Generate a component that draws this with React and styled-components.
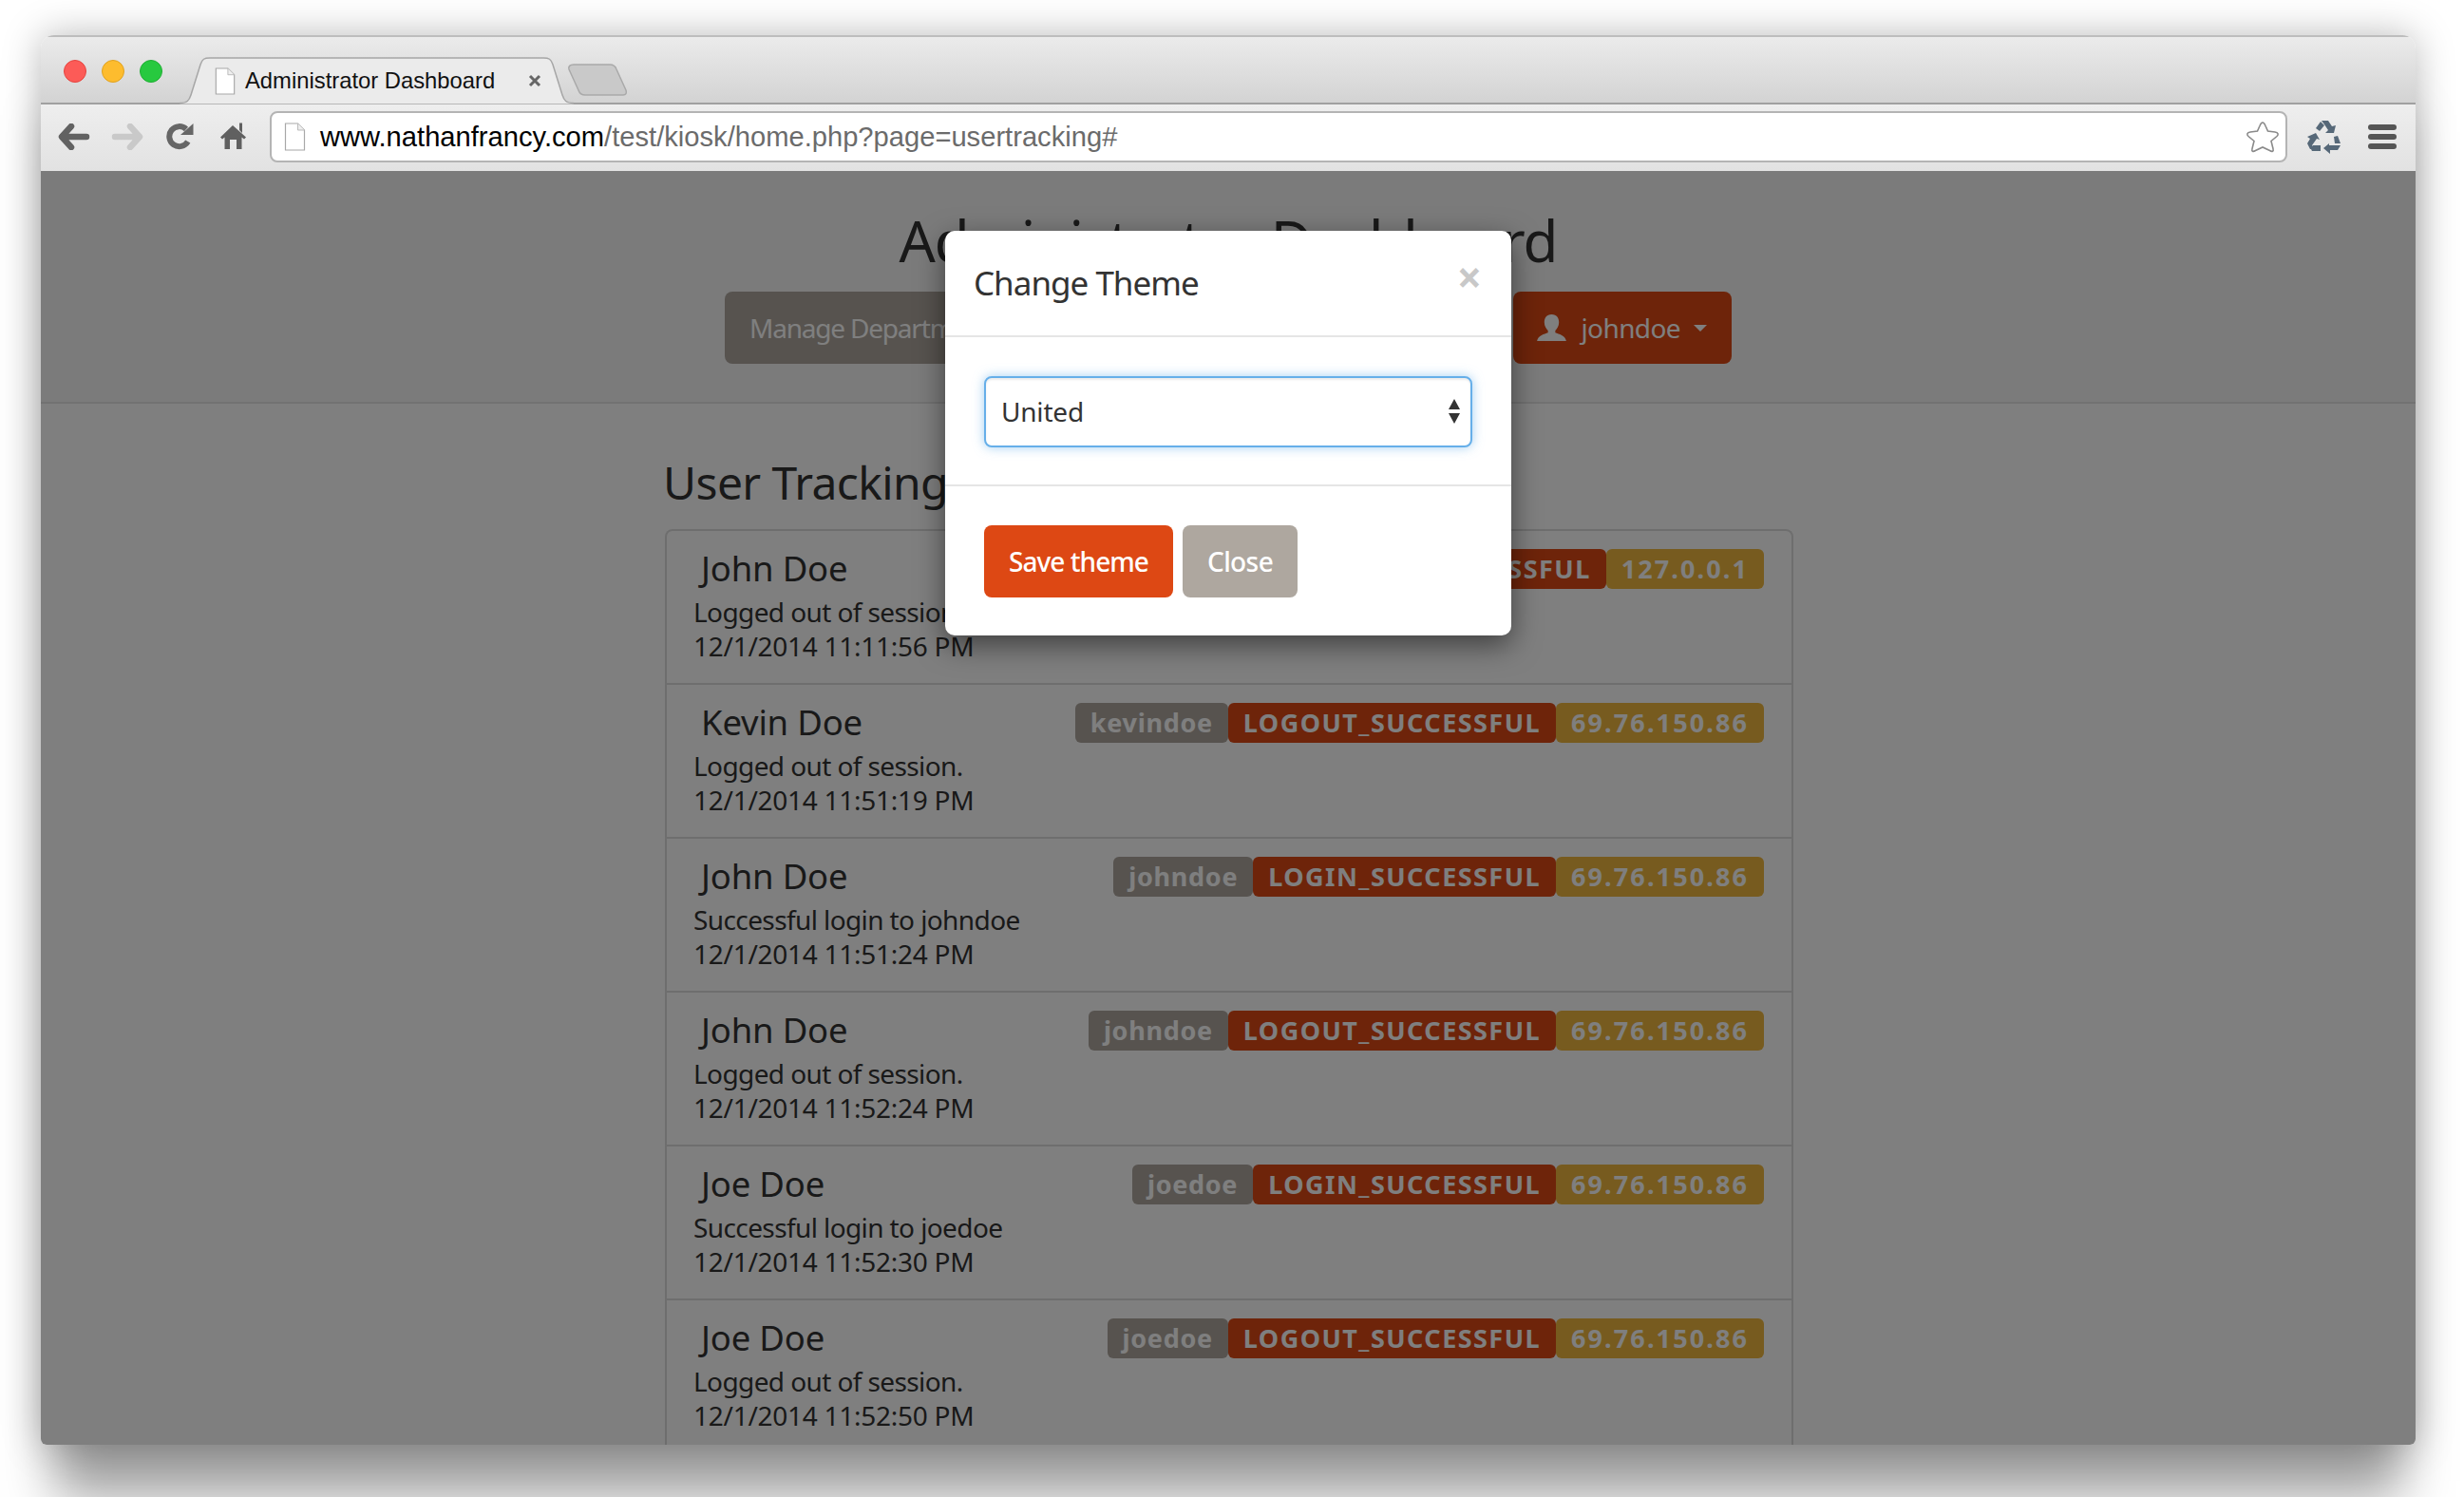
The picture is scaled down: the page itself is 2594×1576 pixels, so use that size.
import React from 'react';
import styled, { createGlobalStyle } from 'styled-components';

const Global = createGlobalStyle`
  html, body { margin: 0; padding: 0; background: #fff; overflow: hidden; }
  * { box-sizing: border-box; }
`;
const UI = `"Noto Sans", "Open Sans", sans-serif`;
const CHROME = `"Liberation Sans", Arial, sans-serif`;

const Stage = styled.div`
  width: 2594px; height: 1576px; padding: 37px 51px 0 43px; overflow: hidden;
`;
const Win = styled.div`
  width: 2500px; height: 1484px; display: flex; flex-direction: column;
  border-radius: 14px 14px 6px 6px;
  box-shadow: 0 70px 50px -14px rgba(0,0,0,.36), 0 0 40px rgba(0,0,0,.28);
  overflow: hidden; background: #fff;
`;
const Strip = styled.div`
  height: 73px; flex: none; display: flex; align-items: flex-end; padding-left: 24px;
  background: linear-gradient(#ebebeb, #d3d3d3);
  border-top: 2px solid #bdbdbd; border-bottom: 2px solid #a0a0a0;
`;
const Lights = styled.div`display: flex; gap: 16px; margin: 0 18px 21px 0;`;
const Light = styled.span`
  width: 24px; height: 24px; border-radius: 50%; background: ${p => p.$c};
  border: 1px solid ${p => p.$b};
`;
const Tab = styled.div`
  position: relative; width: 415px; height: 50px; margin-bottom: -2px; z-index: 1;
  display: flex; align-items: center; padding: 0 0 0 37px; flex: none;
  font: 23.8px ${CHROME}; color: #111;
`;
const TabShape = styled.svg`position: absolute; left: 0; top: 0; z-index: -1;`;
const TabTitle = styled.span`margin-left: 10px; width: 298px; white-space: nowrap;`;
const TabClose = styled.svg`display: block;`;
const NewTab = styled.svg`margin: 0 0 7px -8px; flex: none;`;

const Toolbar = styled.div`
  height: 70px; flex: none; display: flex; align-items: center; padding: 0 4px 2px 7px;
  background: linear-gradient(#eeeeee, #e2e2e2);
`;
const Slot = styled.div`
  width: ${p => p.$w || 56}px; height: 56px; flex: none;
  display: flex; align-items: center; justify-content: center;
`;
const Address = styled.div`
  flex: 1; height: 54px; margin: 0 7px 0 10px; display: flex; align-items: center; gap: 15px;
  padding: 0 6px 0 13px;
  background: #fff; border: 2px solid #b4b4b4; border-radius: 8px;
  font: 29.15px ${CHROME}; white-space: nowrap;
`;
const Url = styled.span`flex: 1; color: #6b6b6b;`;
const Host = styled.span`color: #000;`;
const Burger = styled.div`display: flex; flex-direction: column; gap: 4px;`;
const BurgerBar = styled.span`width: 30px; height: 6px; border-radius: 3px; background: #555;`;

const Page = styled.div`
  position: relative; flex: 1; overflow: hidden; background: #fff;
  font-family: ${UI}; color: #333;
`;
const Header = styled.header`
  height: 245px; background: #f7f7f7; border-bottom: 2px solid #e4e4e4;
  display: flex; flex-direction: column; align-items: center; padding-top: 34px;
`;
const Title = styled.h1`
  margin: 0; font-size: 60px; line-height: 78px; font-weight: 400; color: #333; letter-spacing: -1px;
`;
const BtnRow = styled.div`
  width: 1060px; margin-top: 15px; display: flex; justify-content: space-between;
`;
const Btn = styled.button`
  height: 76px; padding: 0 ${p => p.$px || 26}px 0 ${p => p.$pl || p.$px || 26}px; border: 0; border-radius: 8px;
  background: ${p => p.$bg}; color: #fff; font: ${p => p.$w || 400} 28px ${UI}; letter-spacing: ${p => p.$ls || -.6}px;
  display: inline-flex; align-items: center; gap: 14px; white-space: nowrap;
`;
const Caret = styled.span`
  width: 0; height: 0; border: 7.5px solid transparent; border-top-color: #fff; border-bottom: 0;
`;
const Main = styled.main`width: 1190px; margin: 0 auto; padding: 54px 0 0 2px;`;
const Sub = styled.h3`
  margin: 0 0 20px -2px; font-size: 48px; line-height: 58px; font-weight: 400; color: #333; letter-spacing: -.6px;
`;
const List = styled.div`
  border: 2px solid #ddd; border-bottom: 0; border-radius: 8px 8px 0 0;
`;
const Row = styled.div`
  height: 162px; padding: 19px 29px 0 28px; border-bottom: 2px solid #ddd;
  &:last-child { border-bottom: 0; }
`;
const RowTop = styled.div`display: flex; justify-content: space-between; height: 42px;`;
const Name = styled.h4`
  margin: 0 0 0 8px; font-size: 36.5px; line-height: 40px; font-weight: 400; color: #333; letter-spacing: -.2px;
`;
const Badges = styled.div`display: flex;`;
const Badge = styled.span`
  height: 42px; padding: 0 16px; border-radius: 6px; background: ${p => p.$bg};
  color: #fff; font: 700 27px/42px ${UI}; letter-spacing: ${p => p.$ls}px;
`;
const Desc = styled.p`
  margin: 6px 0 0; font-size: 28px; line-height: 36px; color: #333; letter-spacing: -.6px;
`;
const Stamp = styled.span`letter-spacing: -.27px;`;
const Overlay = styled.div`
  position: absolute; inset: 0; background: rgba(0,0,0,.5);
  display: flex; justify-content: center; align-items: flex-start; padding-top: 63px;
`;
const Modal = styled.div`
  width: 596px; height: 426px; background: #fff; border-radius: 10px;
  box-shadow: 0 10px 30px rgba(0,0,0,.5); display: flex; flex-direction: column;
`;
const ModalHead = styled.div`
  height: 112px; flex: none; padding: 0 30px; border-bottom: 2px solid #e5e5e5;
  display: flex; justify-content: space-between; align-items: center;
`;
const ModalTitle = styled.h4`
  margin: -2px 0 0; font-size: 35px; font-weight: 400; color: #333; letter-spacing: -1px;
`;
const CloseX = styled.span`
  font: 700 46px ${UI}; line-height: 1; color: #c8c8c8; margin: -15px 1px 0 0;
`;
const ModalBody = styled.div`
  height: 157px; flex: none; padding: 41px 41px 0 41px; border-bottom: 2px solid #e5e5e5;
`;
const SelectWrap = styled.div`position: relative;`;
const Select = styled.select`
  display: block; width: 100%; height: 75px; padding: 0 16px 2px; appearance: none; background: #fff;
  border: 2px solid #66afe9; border-radius: 8px; color: #333; font: 400 28px ${UI}; letter-spacing: -.2px;
  box-shadow: inset 0 2px 2px rgba(0,0,0,.075), 0 0 12px rgba(102,175,233,.6); outline: none;
`;
const Spinner = styled.svg`position: absolute; right: 12px; top: 23px; pointer-events: none;`;
const ModalFoot = styled.div`padding: 41px 41px 0; display: flex; gap: 10px;`;

const Arrow = ({ color, flip }) => (
  <svg width="34" height="28" viewBox="0 0 34 28" style={flip ? { transform: 'scaleX(-1)' } : undefined}>
    <path d="M14 3 L4 14 L14 25 M5 14 H30" fill="none" stroke={color} strokeWidth="6.5" strokeLinecap="round" strokeLinejoin="round" />
  </svg>
);
const Reload = () => (
  <svg width="30" height="30" viewBox="0 0 30 30">
    <path d="M22.8 20 A10.5 10.5 0 1 1 21 7" fill="none" stroke="#666" strokeWidth="6" />
    <path d="M15 13 H28.5 V1 Z" fill="#666" />
  </svg>
);
const Home = () => (
  <svg width="28" height="30" viewBox="0 0 28 30">
    <path d="M13 3 L27 15.5 L25 17.5 L22.5 15.5 V28 H17 V18 H10 V28 H4.5 V15.5 L2 17.5 L0 15.5 Z M20 0.5 H23 V11 L20 8 Z" fill="#606060" />
  </svg>
);
const Recycle = () => (
  <svg width="40" height="40" viewBox="5 4 40 40">
    <g fill="#566878">
      <path d="M17 15 L22 8 L26 12 L21 18 Z" />
      <path d="M23 7 H30 L34 13 L38 12 L36 20 H27 L30 17 L26 11 Z" />
      <path d="M36 24 L40 23 L43 31 H37 Z" />
      <path d="M25 36 L31 31 V33 H43 L40 38 H32 V42 Z" />
      <path d="M14 33 H22 V39 H13 L11.5 36 Z" />
      <path d="M8 24 L17 20 L21 27 L18 26 L13 33 L15 37 H11 L8 31 L11 26 Z" />
    </g>
  </svg>
);
const FileIcon = ({ w, h }) => (
  <svg width={w} height={h} viewBox="0 0 22 30">
    <path d="M1 1 H14 L21 8 V29 H1 Z" fill="#fff" stroke="#a8a8a8" strokeWidth="1.2" />
    <path d="M14 1 V8 H21" fill="#eee" stroke="#bbb" strokeWidth="1" />
  </svg>
);
const Star = () => (
  <svg width="36" height="34" viewBox="0 0 36 34">
    <path d="M18 2 C19.5 2 20 3 21 5.5 L23.5 11 L31 12 C34.5 12.5 35 14.5 33 16.5 L27 21.5 L29 29.5 C29.8 32.5 28 33 25.5 31.5 L18 28 L10.5 31.5 C8 33 6.2 32.5 7 29.5 L9 21.5 L3 16.5 C1 14.5 1.5 12.5 5 12 L12.5 11 L15 5.5 C16 3 16.5 2 18 2 Z" fill="#fff" stroke="#8a8a8a" strokeWidth="1.6" />
  </svg>
);
const UserIcon = () => (
  <svg width="33" height="31" viewBox="0 0 30 30" preserveAspectRatio="none">
    <path d="M15 1 C20 1 22 5 22 9 C22 13 20 16 18.5 17.5 V19.5 C22 21 28 22 29 28 H1 C2 22 8 21 11.5 19.5 V17.5 C10 16 8 13 8 9 C8 5 10 1 15 1 Z" fill="#fff" />
  </svg>
);

const GRAY = '#AEA79F', RED = '#DD4814', GOLD = '#EFB73E';
const rows = [
  ['John Doe', 'johndoe', 'LOGOUT_SUCCESSFUL', '127.0.0.1', 'Logged out of session.', '12/1/2014 11:11:56 PM'],
  ['Kevin Doe', 'kevindoe', 'LOGOUT_SUCCESSFUL', '69.76.150.86', 'Logged out of session.', '12/1/2014 11:51:19 PM'],
  ['John Doe', 'johndoe', 'LOGIN_SUCCESSFUL', '69.76.150.86', 'Successful login to johndoe', '12/1/2014 11:51:24 PM'],
  ['John Doe', 'johndoe', 'LOGOUT_SUCCESSFUL', '69.76.150.86', 'Logged out of session.', '12/1/2014 11:52:24 PM'],
  ['Joe Doe', 'joedoe', 'LOGIN_SUCCESSFUL', '69.76.150.86', 'Successful login to joedoe', '12/1/2014 11:52:30 PM'],
  ['Joe Doe', 'joedoe', 'LOGOUT_SUCCESSFUL', '69.76.150.86', 'Logged out of session.', '12/1/2014 11:52:50 PM'],
];

export default function App() {
  return (
    <Stage>
      <Global />
      <Win>
        <Strip>
          <Lights>
            <Light $c="#fc5b57" $b="#e5443f" />
            <Light $c="#fdbc2e" $b="#e0a21f" />
            <Light $c="#27c93f" $b="#1fae33" />
          </Lights>
          <Tab>
            <TabShape width="415" height="50" viewBox="0 0 415 50">
              <path d="M0 48.5 C8 48.5 10 46 12 40 L22 8 C24 2 26 1 32 1 L383 1 C389 1 391 2 393 8 L403 40 C405 46 407 48.5 415 48.5 V50 H0 Z" fill="#ebebeb" stroke="#a6a6a6" strokeWidth="1.5" />
            </TabShape>
            <FileIcon w="22" h="29" />
            <TabTitle>Administrator Dashboard</TabTitle>
            <TabClose width="14" height="14" viewBox="0 0 14 14">
              <path d="M2 2 L12 12 M12 2 L2 12" stroke="#666" strokeWidth="3" />
            </TabClose>
          </Tab>
          <NewTab width="66" height="34" viewBox="0 0 66 34">
            <path d="M8 1 H46 C50 1 52 3 53 6 L63 28 C64 31 63 33 60 33 H20 C16 33 14 31 13 28 L3 6 C2 3 4 1 8 1 Z" fill="#c9c9c9" stroke="#a9a9a9" strokeWidth="1.5" />
          </NewTab>
        </Strip>
        <Toolbar>
          <Slot><Arrow color="#626262" /></Slot>
          <Slot><Arrow color="#c9c9c9" flip /></Slot>
          <Slot><Reload /></Slot>
          <Slot><Home /></Slot>
          <Address>
            <FileIcon w="23" h="30" />
            <Url><Host>www.nathanfrancy.com</Host>/test/kiosk/home.php?page=usertracking#</Url>
            <Star />
          </Address>
          <Slot $w={62}><Recycle /></Slot>
          <Slot $w={62}><Burger><BurgerBar /><BurgerBar /><BurgerBar /></Burger></Slot>
        </Toolbar>
        <Page>
          <Header>
            <Title>Administrator Dashboard</Title>
            <BtnRow>
              <Btn $bg={GRAY} $ls={-1.2}>Manage Departments</Btn>
              <Btn $bg={RED} $pl={24} $px={26}><UserIcon />johndoe<Caret /></Btn>
            </BtnRow>
          </Header>
          <Main>
            <Sub>User Tracking</Sub>
            <List>
              {rows.map((r, i) => (
                <Row key={i}>
                  <RowTop>
                    <Name>{r[0]}</Name>
                    <Badges>
                      <Badge $bg={GRAY} $ls={.7}>{r[1]}</Badge>
                      <Badge $bg={RED} $ls={1.45}>{r[2]}</Badge>
                      <Badge $bg={GOLD} $ls={2.1}>{r[3]}</Badge>
                    </Badges>
                  </RowTop>
                  <Desc>{r[4]}<br /><Stamp>{r[5]}</Stamp></Desc>
                </Row>
              ))}
            </List>
          </Main>
          <Overlay>
            <Modal>
              <ModalHead>
                <ModalTitle>Change Theme</ModalTitle>
                <CloseX>×</CloseX>
              </ModalHead>
              <ModalBody>
                <SelectWrap>
                  <Select defaultValue="United"><option>United</option></Select>
                  <Spinner width="14" height="28" viewBox="0 0 14 28">
                    <path d="M7 1 L13 12 H1 Z M1 16 H13 L7 27 Z" fill="#333" />
                  </Spinner>
                </SelectWrap>
              </ModalBody>
              <ModalFoot>
                <Btn $bg={RED} $w={500} $ls={-.95}>Save theme</Btn>
                <Btn $bg={GRAY} $w={500}>Close</Btn>
              </ModalFoot>
            </Modal>
          </Overlay>
        </Page>
      </Win>
    </Stage>
  );
}
